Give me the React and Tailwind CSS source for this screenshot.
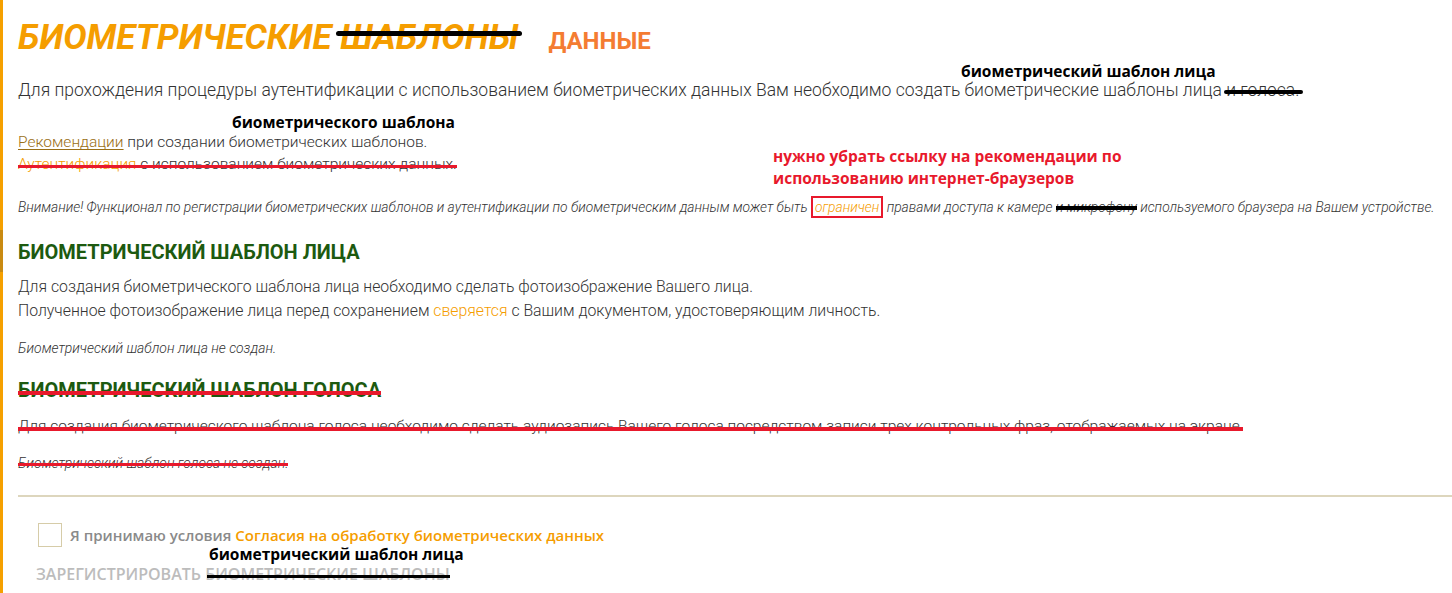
import React from "react";

const Strike = ({ color = "bg-[#e8192c]", h = "h-[3px]", top = "top-[55%]", children, extra = "" }) => (
  <span className="relative">
    {children}
    <span className={`absolute left-0 right-0 ${top} ${h} ${color} ${extra}`} />
  </span>
);

export default function App() {
  return (
    <div className="flex min-h-[593px] bg-white font-['Roboto',sans-serif] text-[#333]">
      <div className="flex w-[3px] shrink-0 flex-col bg-[#f5a000]">
        <div className="h-[230px]" />
        <div className="h-[42px] bg-[#c98a12]" />
      </div>
      <main className="relative flex-1 pl-[15px] pt-[17px]">
        <div className="flex items-baseline">
          <h1 className="text-[35px] font-bold italic leading-[42px] text-[#f59d00]">
            БИОМЕТРИЧЕСКИЕ{" "}
            <span className="relative">
              ШАБЛОНЫ
              <span className="absolute left-[-4px] right-[-4px] top-[14px] h-[5px] rounded-full bg-black" />
            </span>
          </h1>
          <span className="ml-[30px] text-[24px] font-bold text-[#f47c32]">ДАННЫЕ</span>
        </div>

        <p className="mt-[21px] text-[17.5px] font-light leading-[20px]">
          Для прохождения процедуры аутентификации с использованием биометрических данных Вам необходимо создать
          биометрические шаблоны лица{" "}
          <span className="relative">
            и голоса.
            <span className="absolute left-[-2px] right-[-4px] top-[10px] h-[4px] rounded-full bg-black" />
          </span>
        </p>

        <p className="mt-[31px] text-[15.5px] font-light leading-[22px]">
          <span className="text-[#9a6f16] underline underline-offset-2">Рекомендации</span> при создании биометрических
          шаблонов.
        </p>
        <p className="text-[15.5px] font-light leading-[22px]">
          <Strike top="top-[10px]">
            <span className="text-[#f59d00]">Аутентификация</span> с использованием биометрических данных.
          </Strike>
        </p>

        <p className="mt-[21px] text-[13.8px] font-light italic leading-[22px]">
          Внимание! Функционал по регистрации биометрических шаблонов и аутентификации по биометрическим данным может
          быть{" "}
          <span className="border-2 border-[#e8192c] px-[2px] py-[1px] text-[#f59d00]">ограничен</span> правами доступа
          к камере{" "}
          <span className="relative">
            и микрофону
            <span className="absolute left-0 right-0 top-[7px] h-[4px] bg-black" />
          </span>{" "}
          используемого браузера на Вашем устройстве.
        </p>

        <h2 className="mt-[20px] text-[20px] font-bold leading-[28px] text-[#1d5a10]">БИОМЕТРИЧЕСКИЙ ШАБЛОН ЛИЦА</h2>
        <p className="mt-[9px] text-[15.8px] font-light leading-[24px]">
          Для создания биометрического шаблона лица необходимо сделать фотоизображение Вашего лица.
        </p>
        <p className="text-[15.8px] font-light leading-[24px]">
          Полученное фотоизображение лица перед сохранением <span className="text-[#f59d00]">сверяется</span> с Вашим
          документом, удостоверяющим личность.
        </p>
        <p className="mt-[15px] text-[13.9px] font-light italic leading-[20px]">Биометрический шаблон лица не создан.</p>

        <h2 className="mt-[18px] text-[20px] font-bold leading-[28px] text-[#1d5a10]">
          <Strike top="top-[13px]" h="h-[4px]">БИОМЕТРИЧЕСКИЙ ШАБЛОН ГОЛОСА</Strike>
        </h2>
        <p className="mt-[10px] text-[15.5px] font-light leading-[24px]">
          <Strike top="top-[10px]" h="h-[4px]">
            Для создания биометрического шаблона голоса необходимо сделать аудиозапись Вашего голоса посредством записи
            трех контрольных фраз, отображаемых на экране.
          </Strike>
        </p>
        <p className="mt-[15px] text-[13.9px] font-light italic leading-[20px]">
          <Strike top="top-[8px]" h="h-[3px]">Биометрический шаблон голоса не создан.</Strike>
        </p>

        <hr className="mt-[22px] border-t-2 border-[#ddd6bd]" />

        <label className="ml-[20px] mt-[26px] flex items-center gap-[8px] font-['Open_Sans',sans-serif]">
          <span className="h-[24px] w-[24px] border border-[#d6cca8]" />
          <span className="text-[15px] font-semibold text-[#8a8a8a]">
            Я принимаю условия <span className="text-[#f59d00]">Согласия на обработку биометрических данных</span>
          </span>
        </label>

        <div className="ml-[18px] mt-[19px] font-['Open_Sans',sans-serif] text-[16px] font-semibold uppercase leading-[16px] text-[#bcbcbc]">
          Зарегистрировать{" "}
          <span className="relative">
            биометрические шаблоны
            <span className="absolute left-[2px] right-0 top-[12px] h-[3px] bg-black" />
          </span>
        </div>

        {/* annotations */}
        <div className="absolute left-[958px] top-[63px] font-['Open_Sans',sans-serif] text-[15.5px] font-bold leading-[16px] text-black">
          биометрический шаблон лица
        </div>
        <div className="absolute left-[229px] top-[114px] font-['Open_Sans',sans-serif] text-[15.5px] font-bold leading-[16px] text-black">
          биометрического шаблона
        </div>
        <div className="absolute left-[770px] top-[145px] font-['Open_Sans',sans-serif] text-[15.5px] font-bold leading-[22px] text-[#e8192c]">
          нужно убрать ссылку на рекомендации по
          <br />
          использованию интернет-браузеров
        </div>
        <div className="absolute left-[206px] top-[546px] font-['Open_Sans',sans-serif] text-[15.5px] font-bold leading-[16px] text-black">
          биометрический шаблон лица
        </div>
      </main>
    </div>
  );
}
